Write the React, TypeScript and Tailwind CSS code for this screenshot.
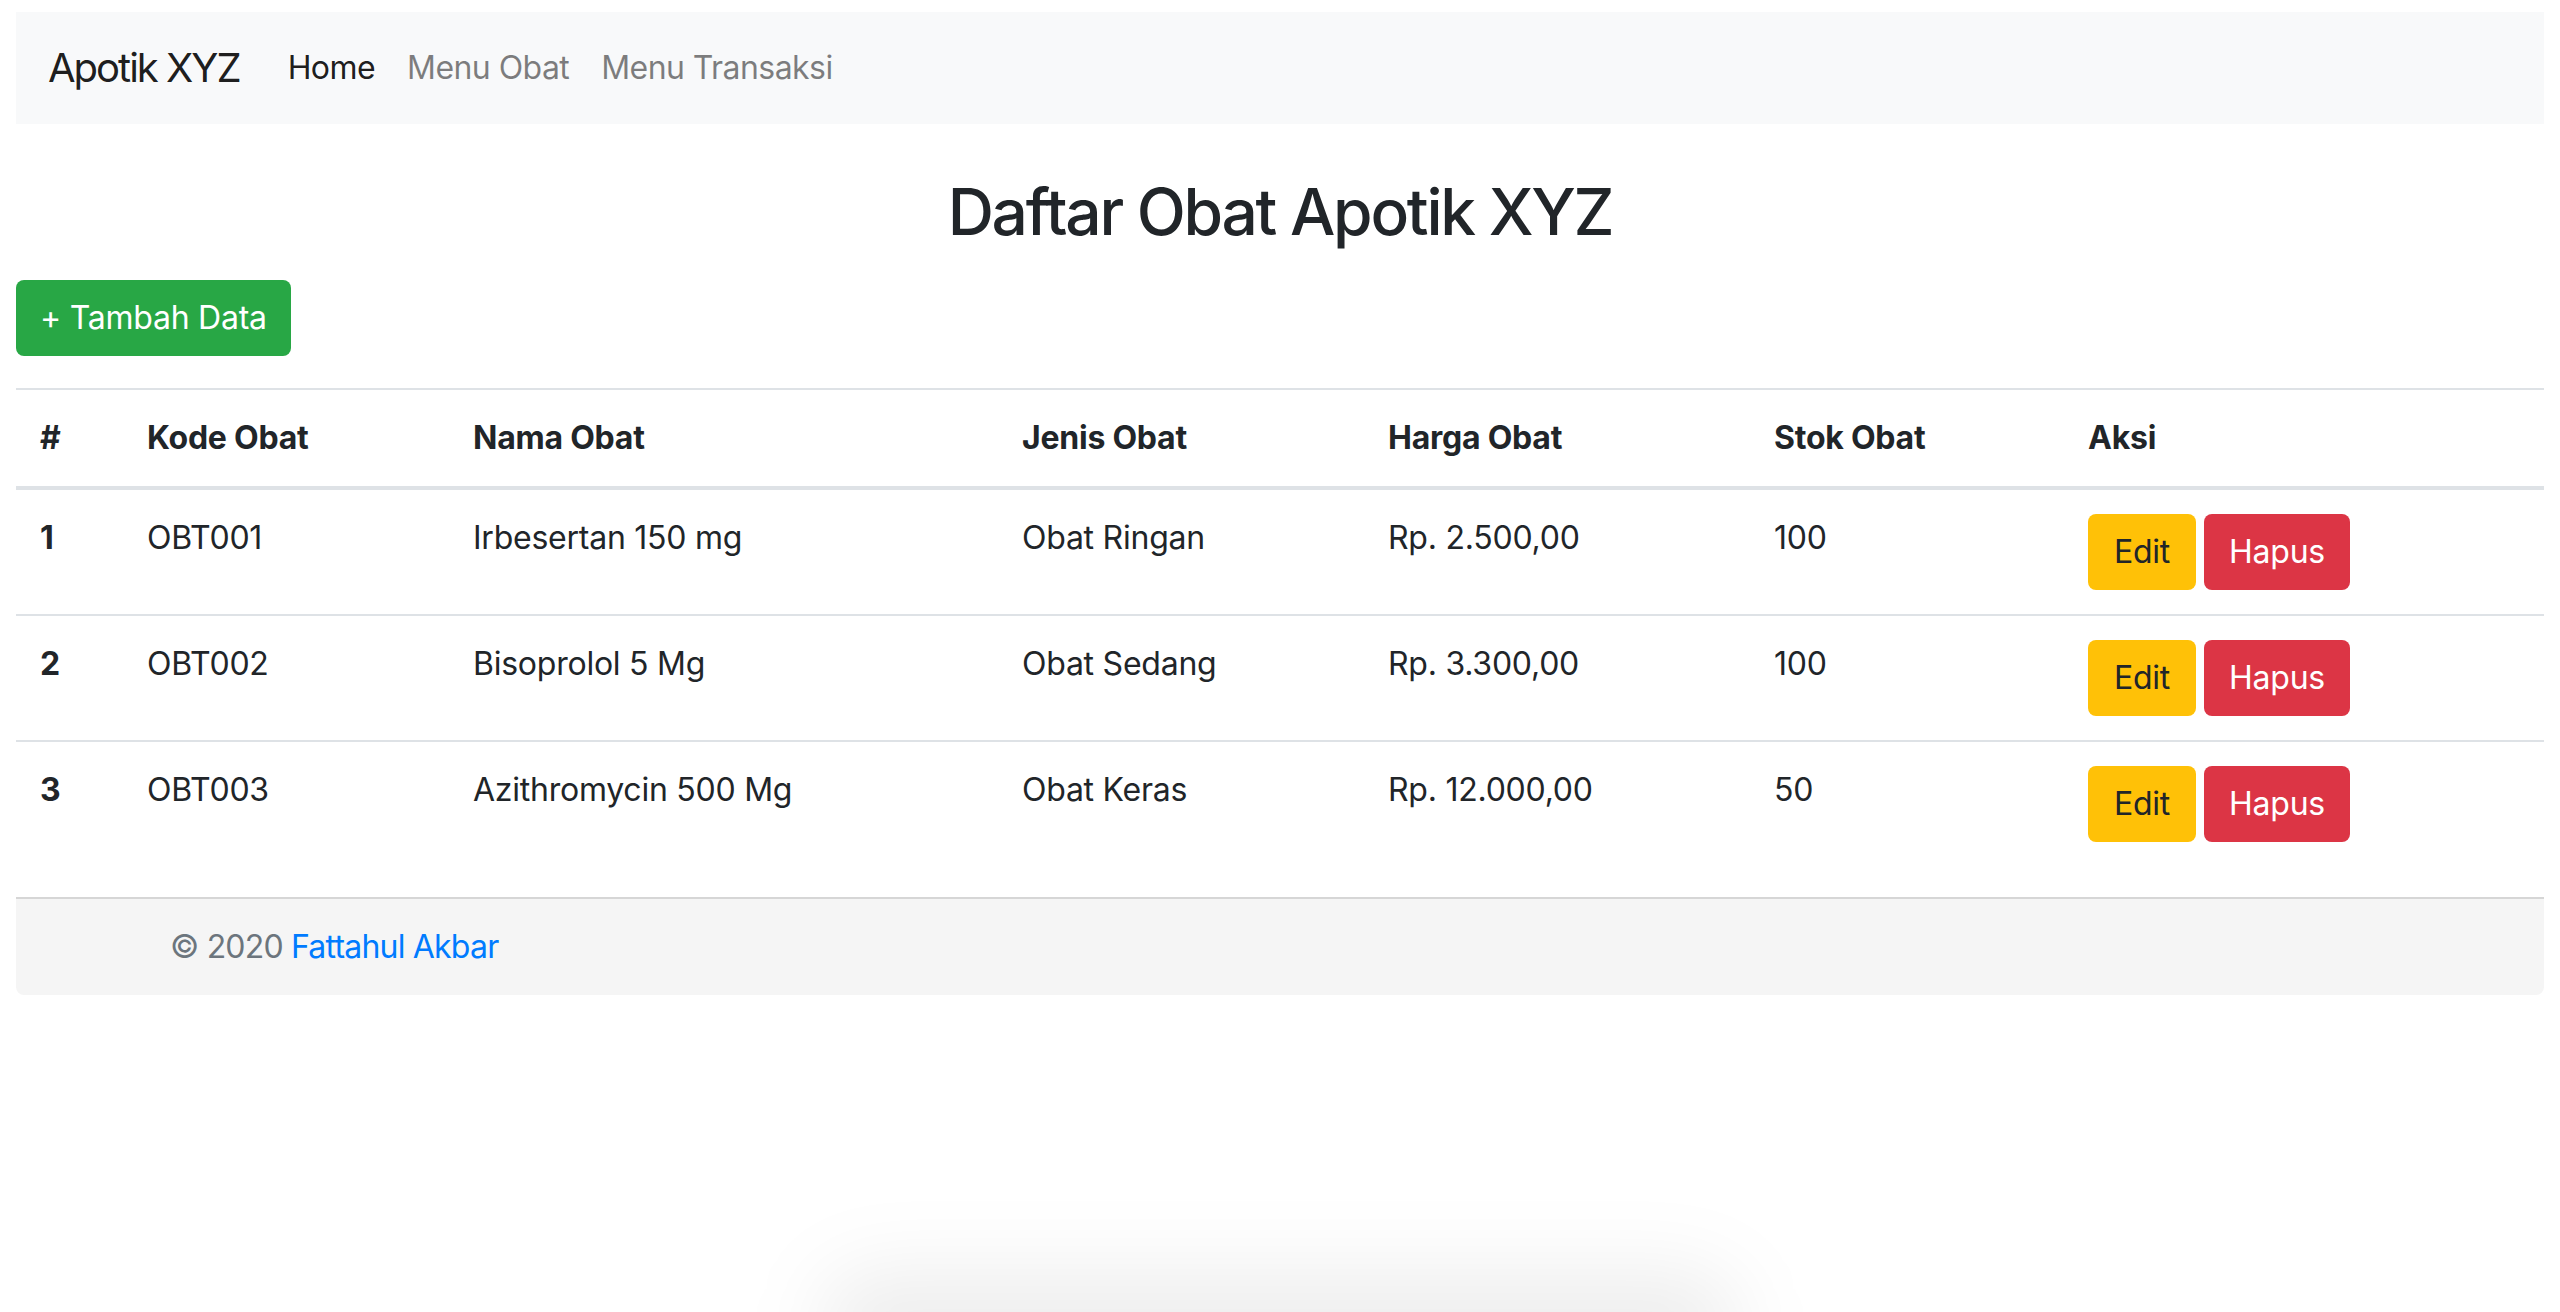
const obat = [
  { no: 1, kode: 'OBT001', nama: 'Irbesertan 150 mg', jenis: 'Obat Ringan', harga: 'Rp. 2.500,00', stok: '100' },
  { no: 2, kode: 'OBT002', nama: 'Bisoprolol 5 Mg', jenis: 'Obat Sedang', harga: 'Rp. 3.300,00', stok: '100' },
  { no: 3, kode: 'OBT003', nama: 'Azithromycin 500 Mg', jenis: 'Obat Keras', harga: 'Rp. 12.000,00', stok: '50' },
]

export default function App() {
  return (
    <div className="relative min-h-[1312px] overflow-hidden bg-white px-4 pt-3 font-['Inter','Liberation_Sans',sans-serif] tracking-[-0.015em] text-[#212529]">
      {/* Navbar */}
      <nav className="flex h-[112px] items-center bg-[#f8f9fa] px-8 tracking-[-0.035em]">
        <span className="mr-8 text-[40px] leading-[60px] tracking-[-0.05em] text-black/90">Apotik XYZ</span>
        <a className="px-4 text-[32px] leading-[48px] text-black/90">Home</a>
        <a className="px-4 text-[32px] leading-[48px] text-black/50">Menu Obat</a>
        <a className="px-4 text-[32px] leading-[48px] text-black/50">Menu Transaksi</a>
      </nav>

      {/* Title */}
      <h2 className="mt-[49px] text-center text-[64px] font-medium leading-[77px] tracking-[-0.035em]">Daftar Obat Apotik XYZ</h2>

      <button className="mt-[30px] h-[76px] rounded-lg bg-[#28a745] px-6 text-[32px] leading-[48px] text-white">
        + Tambah Data
      </button>

      {/* Table */}
      <table className="mt-8 w-full border-collapse text-left text-[32px] leading-[48px]">
        <thead>
          <tr>
            <th className="w-[107px] border-t-2 border-b-4 border-[#dee2e6] px-6 py-6 font-bold">#</th>
            <th className="w-[326px] border-t-2 border-b-4 border-[#dee2e6] px-6 py-6 font-bold">Kode Obat</th>
            <th className="w-[549px] border-t-2 border-b-4 border-[#dee2e6] px-6 py-6 font-bold">Nama Obat</th>
            <th className="w-[366px] border-t-2 border-b-4 border-[#dee2e6] px-6 py-6 font-bold">Jenis Obat</th>
            <th className="w-[386px] border-t-2 border-b-4 border-[#dee2e6] px-6 py-6 font-bold">Harga Obat</th>
            <th className="w-[314px] border-t-2 border-b-4 border-[#dee2e6] px-6 py-6 font-bold">Stok Obat</th>
            <th className="border-t-2 border-b-4 border-[#dee2e6] px-6 py-6 font-bold">Aksi</th>
          </tr>
        </thead>
        <tbody>
          {obat.map((o) => (
            <tr key={o.no}>
              <th className="border-t-2 border-[#dee2e6] px-6 py-6 align-top font-bold">{o.no}</th>
              <td className="border-t-2 border-[#dee2e6] px-6 py-6 align-top">{o.kode}</td>
              <td className="border-t-2 border-[#dee2e6] px-6 py-6 align-top">{o.nama}</td>
              <td className="border-t-2 border-[#dee2e6] px-6 py-6 align-top">{o.jenis}</td>
              <td className="border-t-2 border-[#dee2e6] px-6 py-6 align-top">{o.harga}</td>
              <td className="border-t-2 border-[#dee2e6] px-6 py-6 align-top">{o.stok}</td>
              <td className="border-t-2 border-[#dee2e6] px-6 py-6 align-top">
                <div className="flex gap-2">
                  <button className="h-[76px] w-[108px] rounded-lg bg-[#ffc107] text-[32px] leading-[48px] text-[#212529]">Edit</button>
                  <button className="h-[76px] w-[146px] rounded-lg bg-[#dc3545] text-[32px] leading-[48px] text-white">Hapus</button>
                </div>
              </td>
            </tr>
          ))}
        </tbody>
      </table>

      {/* Footer */}
      <footer className="mt-[31px] flex h-[98px] items-center rounded-b-lg border-t-2 border-[#d6d6d6] bg-[#f5f5f5] pl-[154px] text-[32px] leading-[48px] tracking-[-0.025em] text-[#6c757d]">
        <span>
          © 2020 <a className="text-[#007bff]">Fattahul Akbar</a>
        </span>
      </footer>

      {/* dock shadow at bottom edge */}
      <div className="absolute bottom-[-70px] left-[820px] h-[110px] w-[920px] rounded-[60px] bg-black/[0.07] blur-2xl" />
    </div>
  )
}
